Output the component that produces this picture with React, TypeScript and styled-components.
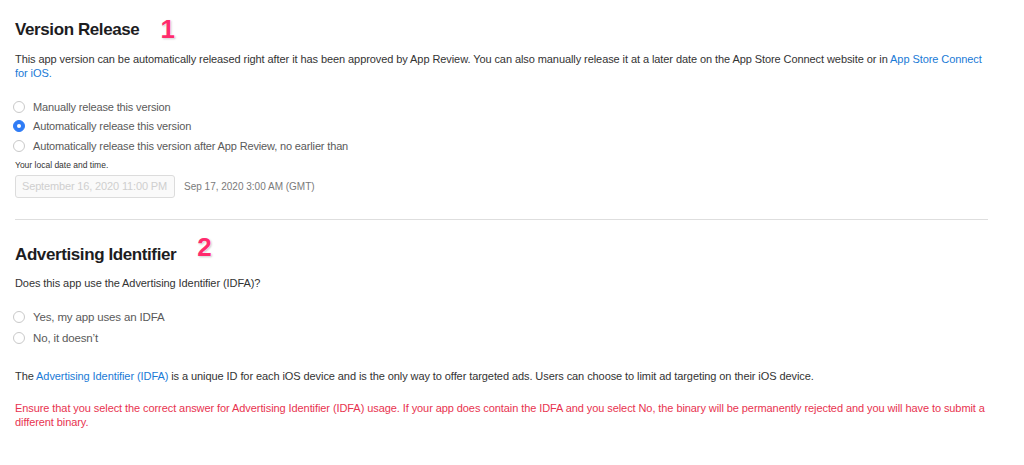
import React from "react";
import styled, { createGlobalStyle } from "styled-components";

const Global = createGlobalStyle`
  html, body { margin: 0; padding: 0; background: #ffffff; }
  body { font-family: "Liberation Sans", Arial, sans-serif; color: #333333; }
`;

const Page = styled.div`
  padding: 20px 36px 0 15px;
  width: 973px;
`;

const Section = styled.section<{ $mt?: number }>`
  display: flex;
  flex-direction: column;
  margin-top: ${(p) => p.$mt ?? 0}px;
`;

const HeaderRow = styled.div<{ $gap: number }>`
  display: flex;
  align-items: center;
  gap: ${(p) => p.$gap}px;
  height: 20px;
`;

const Title = styled.h2`
  margin: 0;
  font-size: 17px;
  line-height: 20px;
  font-weight: 700;
  letter-spacing: -0.4px;
  color: #1d1d1f;
`;

const Badge = styled.span<{ $top: number }>`
  font-size: 26px;
  font-weight: 700;
  line-height: 20px;
  color: #ff2b6d;
  text-shadow: 0 0 1px #fff, 0 0 2px #fff, 1px 1px 2px rgba(0, 0, 0, 0.25);
  position: relative;
  top: ${(p) => p.$top}px;
`;

const Text = styled.p<{ $mt: number; $red?: boolean }>`
  margin: ${(p) => p.$mt}px 0 0;
  font-size: 11px;
  line-height: 14px;
  letter-spacing: -0.08px;
  color: ${(p) => (p.$red ? "#e8334f" : "#333333")};
`;

const Link = styled.a`
  color: #1a7ad6;
  text-decoration: none;
`;

const RadioGroup = styled.div<{ $mt: number; $row: number }>`
  margin-top: ${(p) => p.$mt}px;
  display: grid;
  grid-auto-rows: ${(p) => p.$row}px;
`;

const RadioRow = styled.label<{ $size?: number }>`
  display: flex;
  align-items: center;
  gap: 8px;
  font-size: ${(p) => p.$size ?? 11}px;
  letter-spacing: -0.15px;
  color: #5a5a5a;
`;

const Circle = styled.span<{ $on?: boolean }>`
  width: 12px;
  height: 12px;
  box-sizing: border-box;
  border-radius: 50%;
  margin-left: -2px;
  border: 1px solid ${(p) => (p.$on ? "#2f7cf6" : "#c9c9c9")};
  background: ${(p) => (p.$on ? "#2f7cf6" : "#ffffff")};
  display: flex;
  align-items: center;
  justify-content: center;
  &::after {
    content: "";
    width: 4px;
    height: 4px;
    border-radius: 50%;
    background: #ffffff;
    display: ${(p) => (p.$on ? "block" : "none")};
  }
`;

const Hint = styled.div`
  margin-top: 3px;
  font-size: 8.5px;
  line-height: 12px;
  color: #333333;
`;

const DateRow = styled.div`
  margin-top: 4px;
  display: flex;
  align-items: center;
  gap: 9px;
`;

const DateInput = styled.div`
  width: 160px;
  height: 23px;
  box-sizing: border-box;
  border: 1px solid #dcdcdc;
  border-radius: 3px;
  background: #fafafa;
  padding-left: 6px;
  display: flex;
  align-items: center;
  font-size: 11px;
  letter-spacing: -0.15px;
  color: #cfcfcf;
`;

const GmtText = styled.span`
  font-size: 10px;
  color: #7a7a7a;
`;

const Divider = styled.hr`
  margin: 21px 0 0;
  border: none;
  border-top: 1px solid #dedede;
  height: 0;
`;

export default function App() {
  return (
    <>
      <Global />
      <Page>
        <Section>
          <HeaderRow $gap={21}>
            <Title>Version Release</Title>
            <Badge $top={-1}>1</Badge>
          </HeaderRow>
          <Text $mt={12}>
            This app version can be automatically released right after it has been approved by App Review. You can also
            manually release it at a later date on the App Store Connect website or in{" "}
            <Link>App Store Connect for iOS.</Link>
          </Text>
          <RadioGroup $mt={17} $row={19.5}>
            <RadioRow>
              <Circle />
              Manually release this version
            </RadioRow>
            <RadioRow>
              <Circle $on />
              Automatically release this version
            </RadioRow>
            <RadioRow>
              <Circle />
              Automatically release this version after App Review, no earlier than
            </RadioRow>
          </RadioGroup>
          <Hint>Your local date and time.</Hint>
          <DateRow>
            <DateInput>September 16, 2020 11:00 PM</DateInput>
            <GmtText>Sep 17, 2020 3:00 AM (GMT)</GmtText>
          </DateRow>
        </Section>
        <Divider />
        <Section $mt={25}>
          <HeaderRow $gap={21}>
            <Title>Advertising Identifier</Title>
            <Badge $top={-8}>2</Badge>
          </HeaderRow>
          <Text $mt={11}>Does this app use the Advertising Identifier (IDFA)?</Text>
          <RadioGroup $mt={17} $row={21}>
            <RadioRow $size={11.5}>
              <Circle />
              Yes, my app uses an IDFA
            </RadioRow>
            <RadioRow $size={11.5}>
              <Circle />
              No, it doesn’t
            </RadioRow>
          </RadioGroup>
          <Text $mt={20}>
            The <Link>Advertising Identifier (IDFA)</Link> is a unique ID for each iOS device and is the only way to offer
            targeted ads. Users can choose to limit ad targeting on their iOS device.
          </Text>
          <Text $mt={18} $red>
            Ensure that you select the correct answer for Advertising Identifier (IDFA) usage. If your app does contain the
            IDFA and you select No, the binary will be permanently rejected and you will have to submit a different binary.
          </Text>
        </Section>
      </Page>
    </>
  );
}
